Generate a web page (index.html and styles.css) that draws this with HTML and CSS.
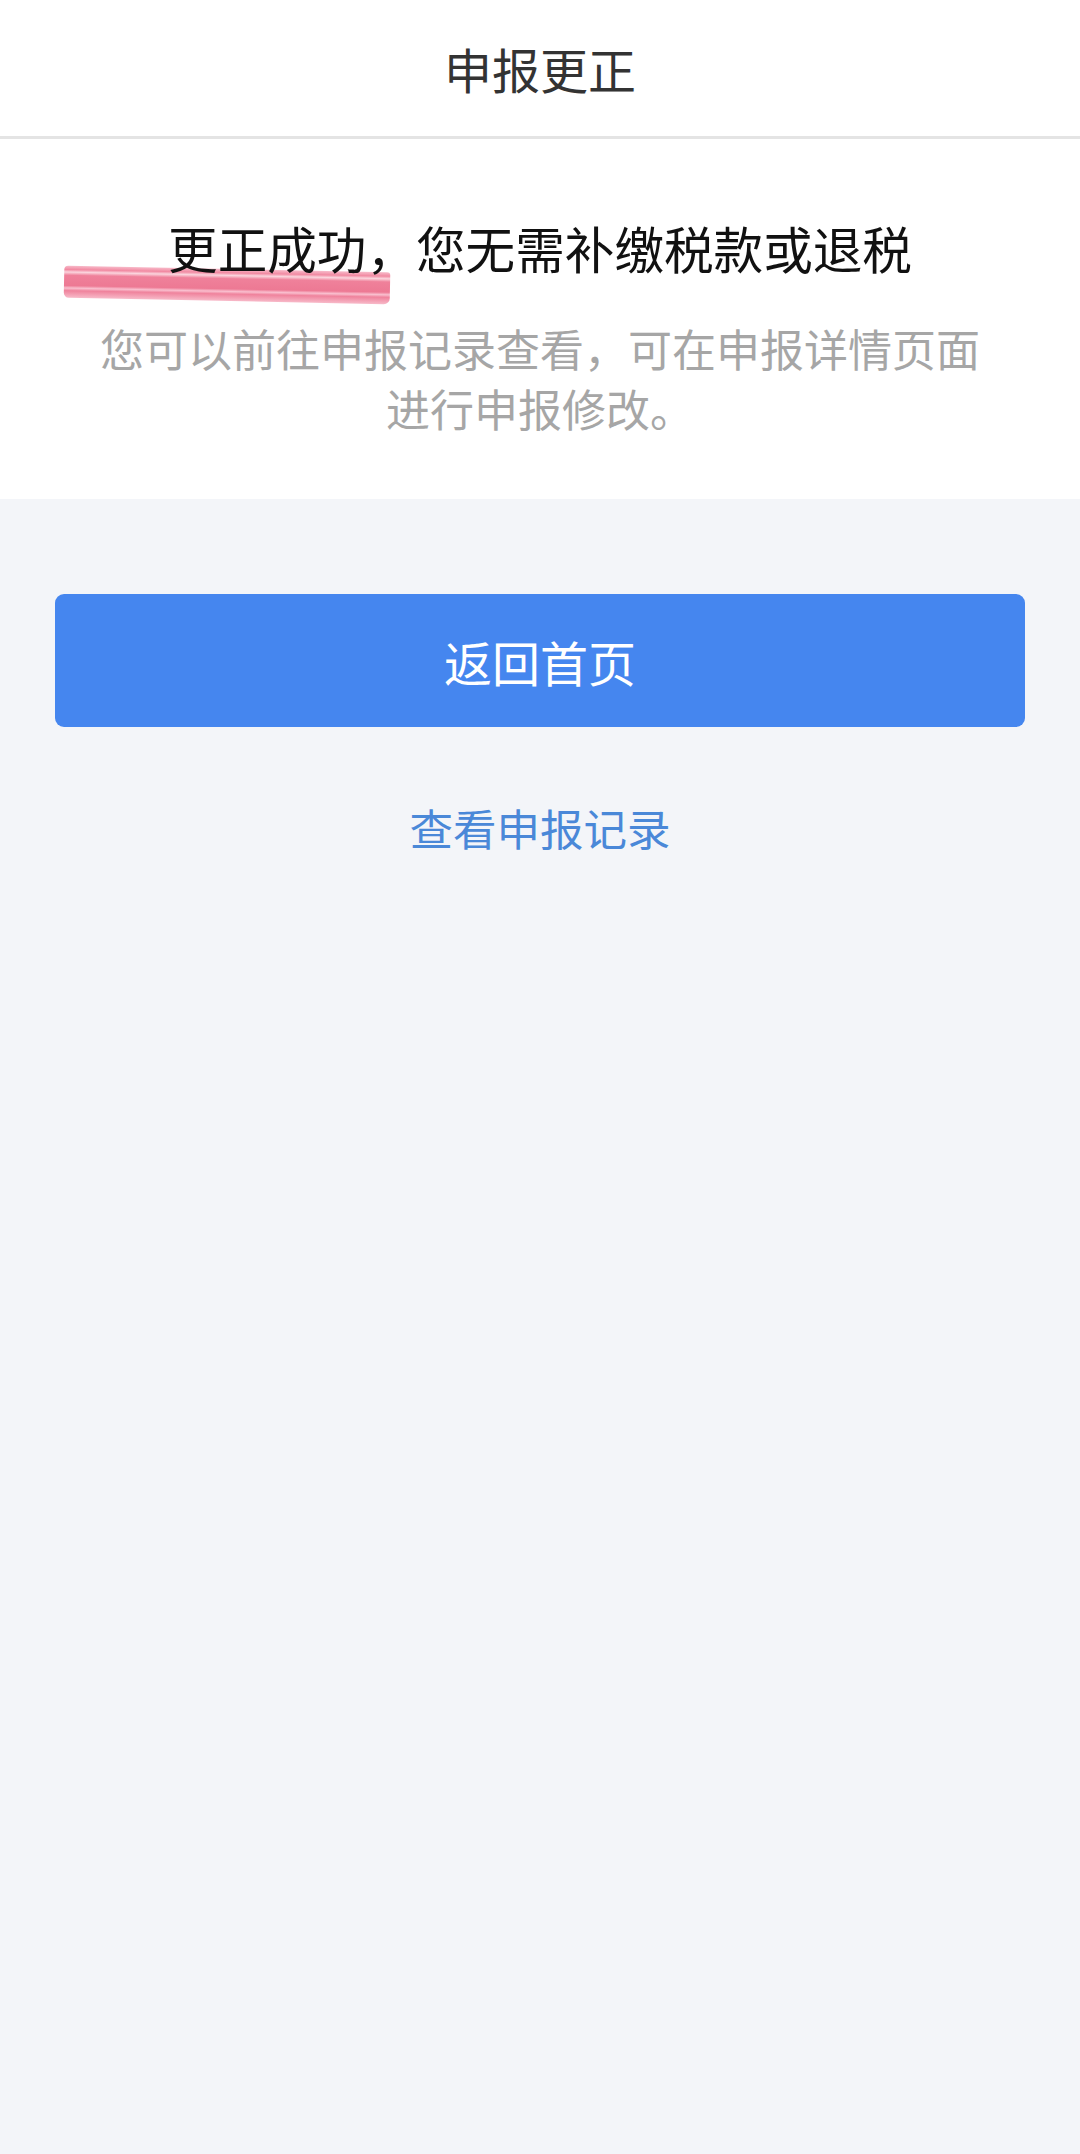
FILE: index.html
```html
<!DOCTYPE html>
<html lang="zh-CN">
<head>
  <meta charset="UTF-8">
  <meta name="viewport" content="width=device-width, initial-scale=1.0">
  <title>申报更正</title>
  <link rel="stylesheet" href="styles.css">
</head>
<body>
  <header class="nav-bar">
    <h1 class="nav-title">申报更正</h1>
  </header>

  <section class="result">
    <div class="result-title">
      <span class="marker"></span>
      <span class="result-text">更正成功，您无需补缴税款或退税</span>
    </div>
    <p class="result-desc">您可以前往申报记录查看，可在申报详情页面<br>进行申报修改。</p>
  </section>

  <div class="actions">
    <button class="btn-primary">返回首页</button>
    <a class="link" href="#">查看申报记录</a>
  </div>
</body>
</html>
```

FILE: styles.css
```css
html, body {
  margin: 0;
  padding: 0;
}
body {
  font-family: "Noto Sans CJK SC", "Noto Sans", sans-serif;
  background-color: #f3f5f9;
  min-height: 2154px;
}
.nav-bar {
  height: 136px;
  background-color: #fff;
  border-bottom: 3px solid #e4e4e4;
  display: flex;
  align-items: center;
  justify-content: center;
}
.nav-title {
  margin: 0;
  font-size: 48px;
  font-weight: 400;
  color: #333;
}
.result {
  background-color: #fff;
  padding: 78px 40px 61px;
  text-align: center;
}
.result-title {
  position: relative;
  display: inline-block;
  font-size: 49.6px;
  line-height: 60px;
  color: #111;
}
.result-text {
  position: relative;
}
.marker {
  position: absolute;
  left: -104px;
  top: 52px;
  width: 326px;
  height: 32px;
  transform: rotate(1.2deg);
  border-radius: 4px 3px 6px 5px;
  background: linear-gradient(180deg,
    rgba(242, 140, 165, 0.6) 0%,
    rgba(240, 125, 152, 0.9) 12%,
    rgba(250, 205, 215, 0.85) 20%,
    rgba(238, 118, 146, 0.92) 30%,
    rgba(236, 114, 142, 0.95) 62%,
    rgba(248, 180, 198, 0.85) 70%,
    rgba(238, 120, 148, 0.92) 78%,
    rgba(242, 140, 165, 0.6) 100%);
}
.result-desc {
  margin: 41px 0 0;
  font-size: 44px;
  line-height: 60px;
  color: #a6a6a6;
}
.actions {
  padding: 95px 55px 0;
  display: flex;
  flex-direction: column;
  align-items: center;
  gap: 71px;
}
.btn-primary {
  width: 100%;
  height: 133px;
  border: none;
  border-radius: 9px;
  background-color: #4586ef;
  color: #fff;
  font-family: inherit;
  font-size: 48px;
}
.link {
  font-size: 43.5px;
  line-height: 60px;
  color: #4a88d8;
  text-decoration: none;
}
```
